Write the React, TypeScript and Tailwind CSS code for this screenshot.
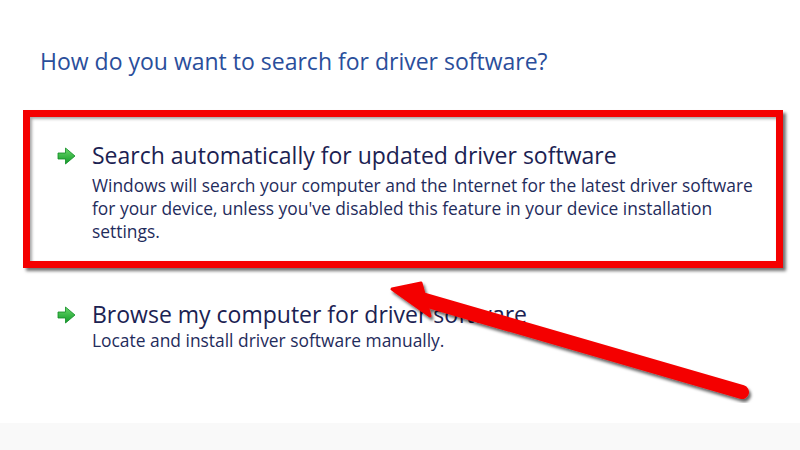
const GreenArrow = () => (
  <svg width="20" height="18" viewBox="0 0 20 18" className="shrink-0">
    <defs>
      <linearGradient id="ga" x1="0" y1="0" x2="0" y2="1">
        <stop offset="0" stopColor="#6ad86a" />
        <stop offset="1" stopColor="#109a28" />
      </linearGradient>
    </defs>
    <path d="M1 6 H8.5 V1 L18 9 L8.5 17 V12 H1 Z" fill="url(#ga)" stroke="#0f8a25" strokeWidth="0.8" strokeLinejoin="round" />
  </svg>
);

const Option = ({ title, lines, gap }: { title: string; lines: string[]; gap: string }) => (
  <div className="flex items-start">
    <div className="w-[35px] pt-[7px] flex justify-start">
      <GreenArrow />
    </div>
    <div>
      <div className="text-[23px] leading-[30px] text-[#1b2252]">{title}</div>
      <div className={`${gap} text-[17.4px] leading-[23px] text-[#1f2c5c]`}>
        {lines.map((line) => (
          <div key={line}>{line}</div>
        ))}
      </div>
    </div>
  </div>
);

export default function App() {
  return (
    <div className="relative flex h-[450px] w-[800px] flex-col overflow-hidden bg-white font-['Open_Sans',sans-serif]">
      <h1 className="pl-[40px] pt-[45px] text-[23px] leading-[32px] text-[#2a4e9b]">
        How do you want to search for driver software?
      </h1>

      <div className="ml-[23px] mr-[17px] mt-[33px] h-[158px] border-[7px] border-[#f40000] pl-[27px] pt-[23px] shadow-[3px_3px_3px_rgba(0,0,0,0.55),inset_2px_2px_3px_rgba(0,0,0,0.35)]">
        <Option
          gap="mt-[4px]"
          title="Search automatically for updated driver software"
          lines={[
            "Windows will search your computer and the Internet for the latest driver software",
            "for your device, unless you've disabled this feature in your device installation",
            "settings.",
          ]}
        />
      </div>

      <div className="pl-[57px] pt-[31px]">
        <Option gap="mt-0" title="Browse my computer for driver software" lines={["Locate and install driver software manually."]} />
      </div>

      <div className="mt-auto h-[27px] bg-[#f9f9f9]" />

      <svg className="pointer-events-none absolute inset-0" width="800" height="450" viewBox="0 0 800 450">
        <defs>
          <filter id="sh" x="-10%" y="-10%" width="120%" height="120%">
            <feDropShadow dx="2" dy="3" stdDeviation="1.5" floodColor="#000" floodOpacity="0.6" />
          </filter>
        </defs>
        <g filter="url(#sh)">
          <line x1="418" y1="298" x2="742" y2="392" stroke="#f40000" strokeWidth="14" strokeLinecap="round" />
          <path d="M392 289 L421 283 L430 316 Z" fill="#f40000" stroke="#f40000" strokeWidth="3" strokeLinejoin="round" />
        </g>
      </svg>
    </div>
  );
}
